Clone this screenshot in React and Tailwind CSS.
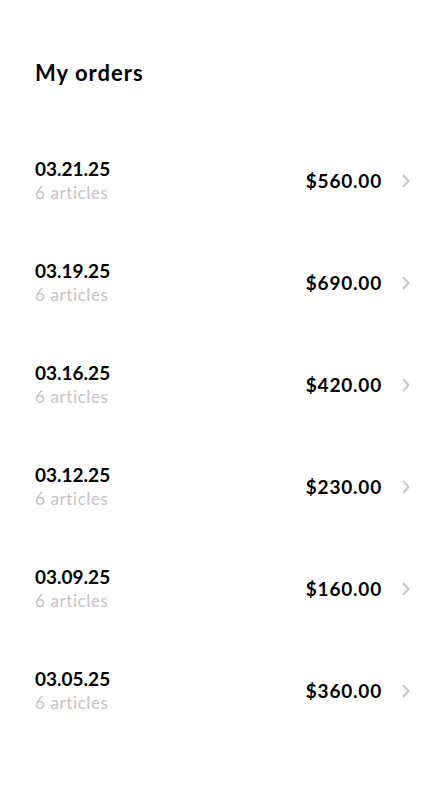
const orders = [
  { date: "03.21.25", count: 6, total: "$560.00" },
  { date: "03.19.25", count: 6, total: "$690.00" },
  { date: "03.16.25", count: 6, total: "$420.00" },
  { date: "03.12.25", count: 6, total: "$230.00" },
  { date: "03.09.25", count: 6, total: "$160.00" },
  { date: "03.05.25", count: 6, total: "$360.00" },
]

const Chevron = () => (
  <svg viewBox="0 0 8 14" className="ml-[20px] h-[14px] w-[8px] text-[#c8c8c8]" fill="none">
    <path d="M1.5 1.5L6.5 7L1.5 12.5" stroke="currentColor" strokeWidth="2" strokeLinecap="round" strokeLinejoin="round" />
  </svg>
)

const App = () => {
  return (
    <div className="min-h-[793px] bg-white text-black" style={{ fontFamily: "Lato, 'Noto Sans', sans-serif" }}>
      <div className="px-[35px] pt-[59px]">
        <h1 className="text-[22px] leading-[28px] font-bold tracking-[1px]">My orders</h1>
      </div>
      <ul className="mt-[43px] pl-[35px] pr-[32px]">
        {orders.map((order) => (
          <li key={order.date} className="flex h-[102px] items-center">
            <div className="flex-1">
              <div className="text-[19px] leading-[22px] font-bold">{order.date}</div>
              <div className="mt-[1px] text-[17px] leading-[24px] tracking-[0.6px] text-[#c4c4c4]">{order.count} articles</div>
            </div>
            <div className="text-[19px] font-bold tracking-[0.8px]">{order.total}</div>
            <Chevron />
          </li>
        ))}
      </ul>
    </div>
  )
}

export default App
